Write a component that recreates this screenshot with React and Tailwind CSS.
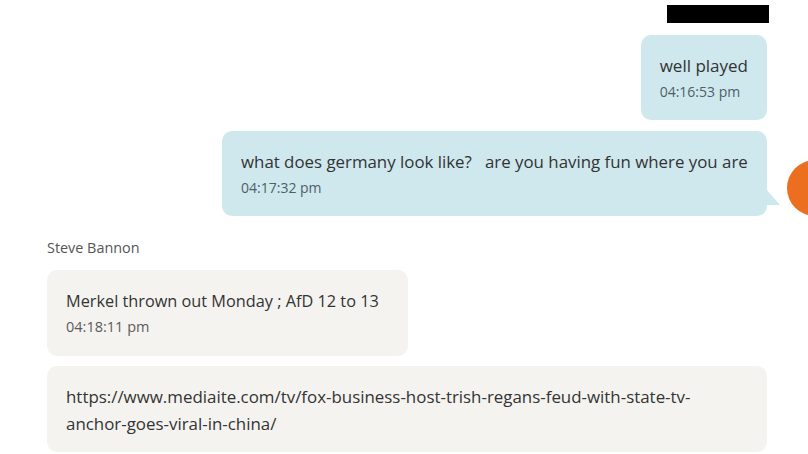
export default function App() {
  return (
    <div className="w-[808px] h-[454px] overflow-hidden bg-white relative font-['Open_Sans',sans-serif] text-[#333]">
      <div className="flex justify-end pr-[39px] pt-[5px]">
        <div className="w-[102px] h-[18px] bg-black" />
      </div>

      <div className="flex flex-col items-end pr-[41px] mt-[12px] gap-[11px]">
        <div className="bg-[#cee8ee] rounded-[10px] px-[19px] pt-[18px] h-[85px]">
          <div className="text-[17px] leading-[26px]">well played</div>
          <div className="text-[14px] leading-[20px] mt-[3px] text-[#4f5f66]">04:16:53 pm</div>
        </div>

        <div className="relative bg-[#cee8ee] rounded-[10px] px-[19px] pt-[18px] h-[85px] w-[545px]">
          <div className="text-[16.85px] leading-[26px] whitespace-pre">what does germany look like?   are you having fun where you are</div>
          <div className="text-[14px] leading-[20px] mt-[3px] text-[#4f5f66]">04:17:32 pm</div>
          <div className="absolute right-[-13px] top-[58px] w-0 h-0 border-t-[16px] border-t-transparent border-l-[14px] border-l-[#cee8ee]" />
        </div>
      </div>

      <div className="absolute left-[787px] top-[160px] w-[56px] h-[56px] rounded-full bg-[#ec6e1f]" />

      <div className="pl-[47px] mt-[22px]">
        <div className="text-[14.4px] leading-[20px] text-[#555]">Steve Bannon</div>
        <div className="mt-[12px] bg-[#f4f3f0] rounded-[10px] px-[19px] pt-[18px] h-[86px] w-[361px]">
          <div className="text-[16.3px] leading-[26px]">Merkel thrown out Monday ; AfD 12 to 13</div>
          <div className="text-[14.5px] leading-[20px] mt-[3px] text-[#5c5c5c]">04:18:11 pm</div>
        </div>
        <div className="mt-[10px] bg-[#f4f3f0] rounded-[10px] px-[19px] pt-[17px] h-[86px] w-[720px]">
          <div className="text-[16.9px] leading-[27px] w-[660px]">
            https://www.mediaite.com/tv/fox-business-host-trish-regans-feud-with-state-tv-
            <br />
            anchor-goes-viral-in-china/
          </div>
        </div>
      </div>
    </div>
  );
}
